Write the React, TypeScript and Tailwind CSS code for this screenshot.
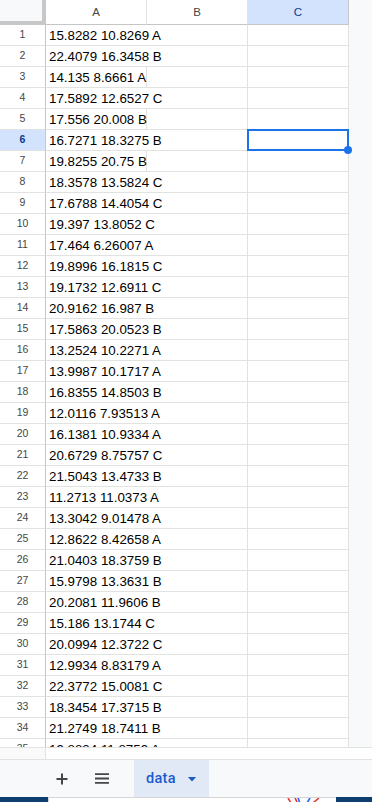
import React from 'react';

const rows = [
  '15.8282 10.8269 A',
  '22.4079 16.3458 B',
  '14.135 8.6661 A',
  '17.5892 12.6527 C',
  '17.556 20.008 B',
  '16.7271 18.3275 B',
  '19.8255 20.75 B',
  '18.3578 13.5824 C',
  '17.6788 14.4054 C',
  '19.397 13.8052 C',
  '17.464 6.26007 A',
  '19.8996 16.1815 C',
  '19.1732 12.6911 C',
  '20.9162 16.987 B',
  '17.5863 20.0523 B',
  '13.2524 10.2271 A',
  '13.9987 10.1717 A',
  '16.8355 14.8503 B',
  '12.0116 7.93513 A',
  '16.1381 10.9334 A',
  '20.6729 8.75757 C',
  '21.5043 13.4733 B',
  '11.2713 11.0373 A',
  '13.3042 9.01478 A',
  '12.8622 8.42658 A',
  '21.0403 18.3759 B',
  '15.9798 13.3631 B',
  '20.2081 11.9606 B',
  '15.186 13.1744 C',
  '20.0994 12.3722 C',
  '12.9934 8.83179 A',
  '22.3772 15.0081 C',
  '18.3454 17.3715 B',
  '21.2749 18.7411 B',
  '19.8834 11.8759 A',
];

// rough Arial 10pt widths, used to decide whether the text spills into column B
const textWidth = (s: string) => {
  let w = 0;
  for (const c of s) {
    if (c >= '0' && c <= '9') w += 7.41;
    else if (c === '.' || c === ' ') w += 3.7;
    else if (c === 'C') w += 9.63;
    else w += 8.89;
  }
  return w;
};

const SELECTED_ROW = 6;

const Row = ({ n, value }: { n: number; value: string }) => {
  const spills = textWidth(value) > 98;
  const selected = n === SELECTED_ROW;
  return (
    <div className="flex h-[21px] shrink-0">
      <div
        className={`w-[46px] shrink-0 flex items-center justify-center border-r border-r-[#c4c7c5] border-b border-b-[#e1e3e1] text-[10.5px] ${
          selected ? 'bg-[#d3e3fd] text-[#0b3a8c] font-bold' : 'bg-white text-[#444746]'
        }`}
      >
        {n}
      </div>
      <div
        className={`w-[101px] shrink-0 relative z-10 border-b border-[#e1e3e1] ${
          spills ? '' : 'border-r'
        }`}
      >
        <span className="block whitespace-nowrap pl-[3px] pt-[2px] leading-[18px] text-[13.33px] text-black">
          {value}
        </span>
      </div>
      <div className="w-[101px] shrink-0 border-r border-b border-[#e1e3e1]" />
      <div className="w-[101px] shrink-0 relative border-r border-b border-[#e1e3e1]">
        {selected && (
          <div className="absolute -top-px -left-px w-[102px] h-[22px] border-2 border-[#1a73e8] z-20">
            <div className="absolute -right-[5px] -bottom-[5px] w-[8px] h-[8px] rounded-full bg-[#1a73e8]" />
          </div>
        )}
      </div>
      <div className="flex-1 bg-[#f8f9fa]" />
    </div>
  );
};

export default function App() {
  return (
    <div
      className="w-[372px] h-[802px] overflow-hidden bg-white flex flex-col"
      style={{ fontFamily: '"Liberation Sans", Arial, sans-serif' }}
    >
      {/* Grid */}
      <div className="h-[747px] overflow-hidden flex flex-col shrink-0">
        {/* Column headers */}
        <div className="flex h-[25px] shrink-0 text-[11.5px] text-[#444746]">
          <div className="w-[46px] shrink-0 bg-[#f8f9fa] border-r-[4px] border-b-[4px] border-[#c7c7c7]" />
          <div className="w-[101px] shrink-0 flex items-center justify-center pt-[2px] border-r border-r-[#e1e3e1] border-b border-b-[#c4c7c5]">
            A
          </div>
          <div className="w-[101px] shrink-0 flex items-center justify-center pt-[2px] border-r border-r-[#e1e3e1] border-b border-b-[#c4c7c5]">
            B
          </div>
          <div className="w-[101px] shrink-0 flex items-center justify-center pt-[2px] bg-[#d3e3fd] text-[#0b3a8c] border-r border-r-[#c4c7c5] border-b border-b-[#c4c7c5]">
            C
          </div>
          <div className="flex-1 bg-[#f8f9fa]" />
        </div>
        {rows.map((v, i) => (
          <Row key={i} n={i + 1} value={v} />
        ))}
      </div>

      {/* Band under the grid */}
      <div className="h-[12px] shrink-0 flex border-t border-[#e1e3e1]">
        <div className="w-[46px] border-r border-[#e1e3e1] bg-[#fafafa]" />
      </div>

      {/* Sheet tabs bar */}
      <div className="h-[38px] shrink-0 flex bg-[#f8f9fa] border-t border-[#e1e3e1]">
        <div className="w-[46px] shrink-0" />
        <div className="w-[32px] flex items-center justify-center text-[#444746]">
          <svg width="12" height="12" viewBox="0 0 12 12">
            <path d="M6 0.5v11M0.5 6h11" stroke="currentColor" strokeWidth="2" />
          </svg>
        </div>
        <div className="w-[32px] ml-[8px] flex items-center justify-center text-[#444746]">
          <svg width="14" height="11" viewBox="0 0 14 11">
            <path d="M0 1.2h14M0 5.5h14M0 9.8h14" stroke="currentColor" strokeWidth="1.8" />
          </svg>
        </div>
        <div className="ml-[16px] w-[75px] bg-[#e1e9f7] flex items-center pl-[12px] gap-[12px]">
          <span
            className="text-[14.5px] font-medium text-[#1b5acb] tracking-[0.3px]"
            style={{ fontFamily: 'Roboto, "Liberation Sans", sans-serif' }}
          >
            data
          </span>
          <svg width="8" height="5" viewBox="0 0 8 5" className="mt-[1px]">
            <path d="M0 0h8L4 4.5z" fill="#1b5acb" />
          </svg>
        </div>
      </div>

      {/* Cut-off banner at the very bottom */}
      <div className="h-[5px] shrink-0 flex">
        <div className="w-[48px] bg-[#0d3f6e]" />
        <div className="w-[288px] bg-white border-l border-t border-[#d6d6d6] relative">
          <svg className="absolute left-[238px] top-0" width="40" height="5" viewBox="0 0 40 5">
            <path d="M1 0l3 5M8 0l2.5 5" stroke="#e53935" strokeWidth="1.6" />
            <path d="M11 0l2 5M20 5l3-5" stroke="#2962ff" strokeWidth="1.6" />
            <path d="M26 5l6-5" stroke="#e53935" strokeWidth="1.6" />
          </svg>
        </div>
        <div className="flex-1 bg-[#0d3f6e]" />
      </div>
    </div>
  );
}
